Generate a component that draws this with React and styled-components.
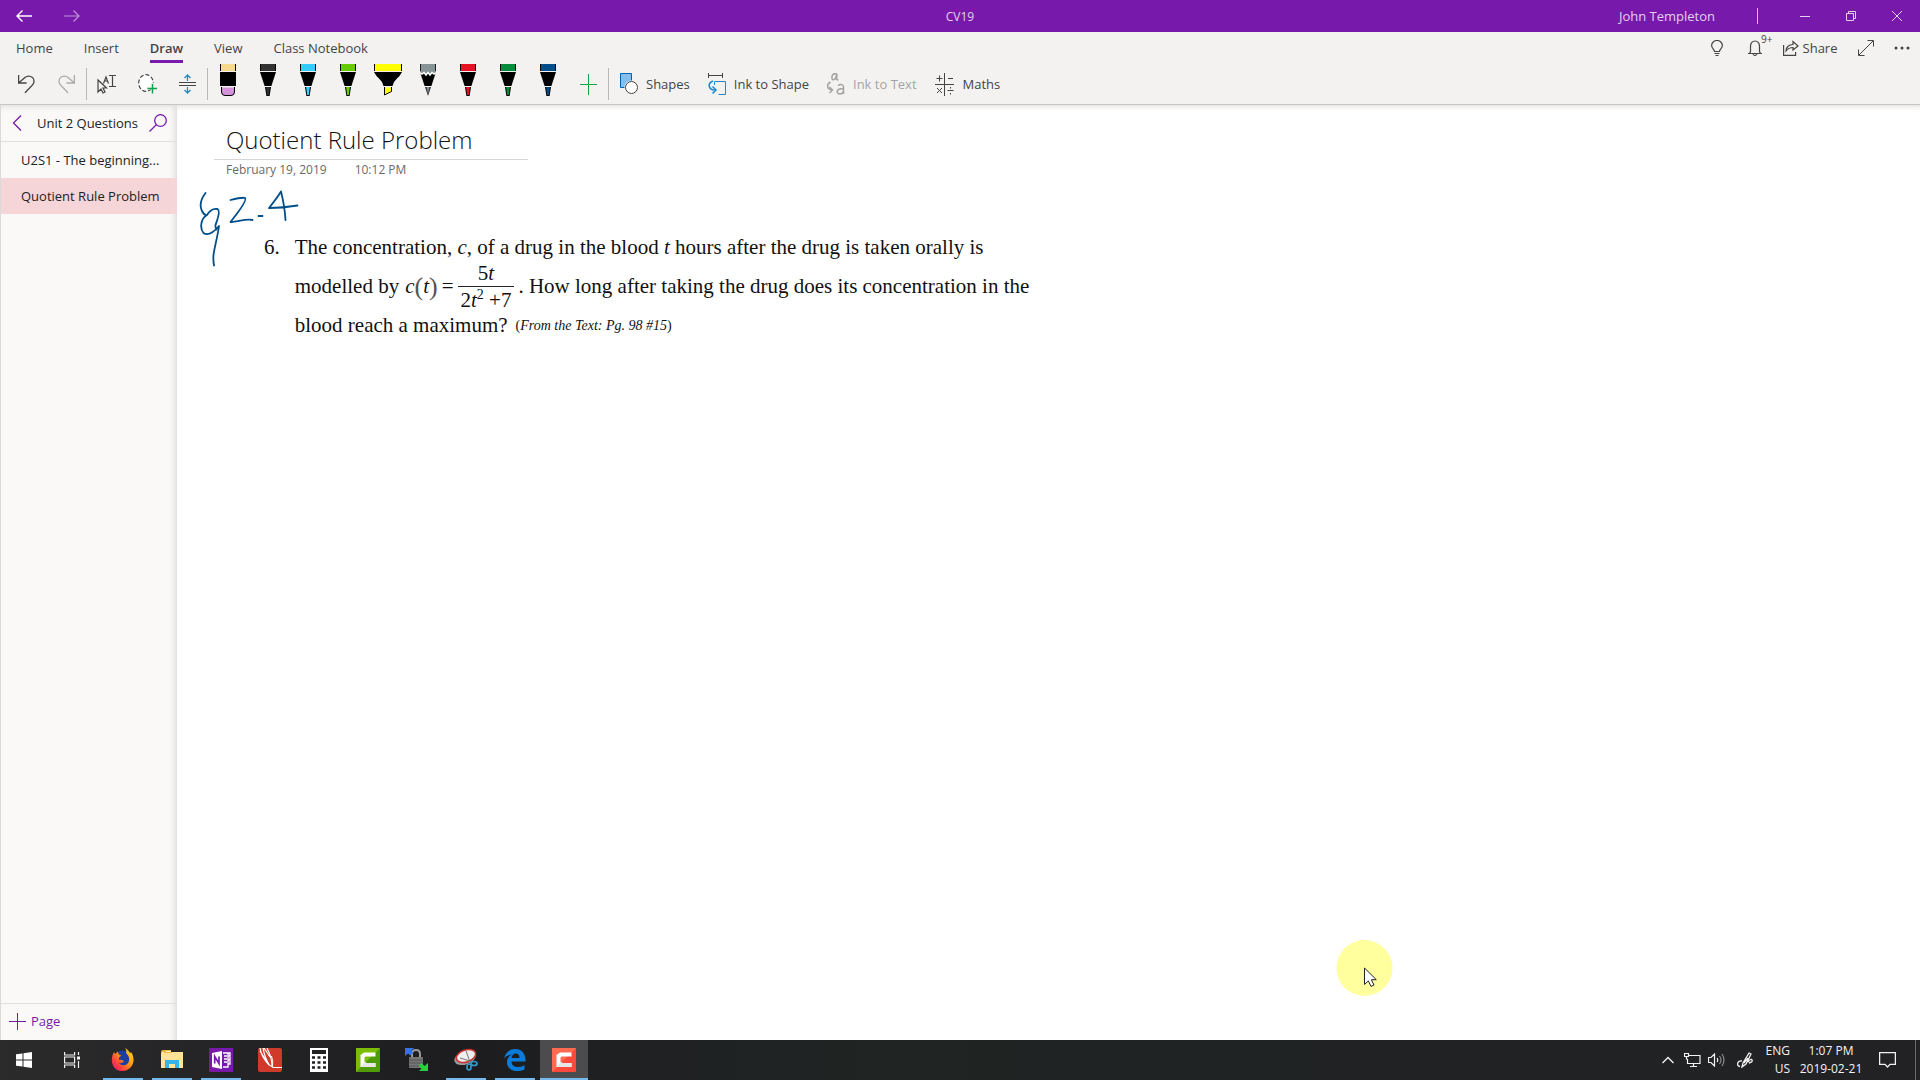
import React from "react";
import styled, { createGlobalStyle } from "styled-components";

const ui = `"Open Sans", "Noto Sans", sans-serif`;
const purple = "#7719aa";

const GlobalStyle = createGlobalStyle`
  * { box-sizing: border-box; }
  body { margin: 0; font-family: ${ui}; font-size: 13px; color: #444; background: #fff; }
  button { font: inherit; color: inherit; background: none; border: 0; padding: 0; margin: 0; }
  p, h1, h2, ul { margin: 0; padding: 0; }
  ul { list-style: none; }
  svg { display: block; flex: none; }
`;

const Shell = styled.div`
  min-height: 100vh;
  display: grid;
  grid-template-rows: 32px 73px 1fr 40px;
`;

/* ---------- title bar ---------- */
const TitleBar = styled.header`
  display: grid;
  grid-template-columns: 1fr auto 1fr;
  align-items: center;
  background: ${purple};
  color: #e6d0f0;
`;
const BarSide = styled.div`
  display: flex;
  align-items: center;
  justify-content: ${(p) => (p.$end ? "flex-end" : "flex-start")};
  height: 32px;
`;
const NavButton = styled.button`
  width: 48px;
  height: 32px;
  display: grid;
  place-items: center;
  color: ${(p) => (p.$dim ? "#c195da" : "#fff")};
`;
const AppTitle = styled.h1`
  font-size: 12px;
  font-weight: 400;
`;
const UserName = styled.span`
  margin-right: 42px;
`;
const BarRule = styled.span`
  width: 1px;
  height: 16px;
  margin-right: 24px;
  background: #d6b9e6;
`;
const WindowButton = styled.button`
  width: 46px;
  height: 32px;
  display: grid;
  place-items: center;
`;

/* ---------- ribbon ---------- */
const Ribbon = styled.div`
  background: #f3f2f1;
  border-bottom: 1px solid #c8c6c4;
  display: grid;
  grid-template-rows: 32px 40px;
`;
const RibbonTop = styled.div`
  display: flex;
  justify-content: space-between;
`;
const Tabs = styled.nav`
  display: flex;
  gap: 31px;
  padding-left: 16px;
`;
const Tab = styled.button`
  height: 31px;
  padding-top: 4px;
  border-bottom: 3px solid ${(p) => (p.$active ? purple : "transparent")};
  font-weight: ${(p) => (p.$active ? 600 : 400)};
`;
const RibbonActions = styled.div`
  display: flex;
  align-items: flex-end;
  padding-right: 2px;
`;
const ActionButton = styled.button`
  height: 32px;
  width: ${(p) => p.$w || 38}px;
  display: flex;
  align-items: center;
  justify-content: center;
  gap: 4px;
`;
const BellWrap = styled.span`
  position: relative;
`;
const Badge = styled.span`
  position: absolute;
  left: 13px;
  top: -7px;
  font-size: 10px;
  line-height: 12px;
`;
const ToolRow = styled.div`
  display: flex;
  padding-left: 6px;
`;
const ToolButton = styled.button`
  width: 40px;
  height: 40px;
  display: grid;
  place-items: center;
`;
const PenButton = styled.button`
  width: 40px;
  height: 40px;
  display: flex;
  justify-content: center;
  align-items: flex-start;
`;
const ToolRule = styled.span`
  width: 1px;
  height: 32px;
  margin-top: 4px;
  background: #bab8b7;
`;
const LabelTool = styled.button`
  height: 40px;
  display: flex;
  align-items: center;
  gap: 8px;
  padding: 0 7px 0 11px;
  opacity: ${(p) => (p.disabled ? 0.45 : 1)};
`;

/* ---------- workspace ---------- */
const Workspace = styled.div`
  display: grid;
  grid-template-columns: 177px 1fr;
`;
const Sidebar = styled.aside`
  display: flex;
  flex-direction: column;
  background: #faf9f8;
  color: #222;
  border-left: 1px solid #dcdad8;
  box-shadow: inset -7px 0 6px -5px #dcdad8, inset 0 6px 6px -5px #dcdad8;
`;
const SectionHead = styled.div`
  height: 37px;
  padding: 0 9px 0 6px;
  display: flex;
  align-items: center;
  justify-content: space-between;
  border-bottom: 1px solid #e1dfdd;
`;
const SectionTitle = styled.h2`
  font-size: 13px;
  font-weight: 400;
`;
const IconButton = styled.button`
  width: 20px;
  height: 24px;
  display: grid;
  place-items: center;
  color: ${purple};
`;
const PageItem = styled.button`
  display: block;
  width: 100%;
  height: 36px;
  padding-left: 20px;
  text-align: left;
  background: ${(p) => (p.$active ? "#f6d5d9" : "transparent")};
  white-space: nowrap;
`;
const AddPage = styled.button`
  margin-top: auto;
  height: 37px;
  padding: 0 0 2px 8px;
  display: flex;
  align-items: center;
  gap: 5px;
  border-top: 1px solid #e1dfdd;
  color: ${purple};
`;
const Canvas = styled.main`
  position: relative;
  background: #fff;
  padding: 18px 37px;
  box-shadow: inset 0 6px 6px -5px #dcdad8;
`;
const NoteTitle = styled.h2`
  width: 314px;
  height: 37px;
  padding-left: 12px;
  border-bottom: 1px solid #d6d6d6;
  font: 300 24px/34px "Open Sans", Lato, sans-serif;
  color: #111;
  white-space: nowrap;
`;
const NoteDate = styled.p`
  display: flex;
  gap: 28px;
  padding-left: 12px;
  font-size: 12px;
  line-height: 20px;
  color: #6a6a6a;
`;
const Problem = styled.section`
  display: flex;
  gap: 15px;
  margin-top: 48px;
  padding-left: 50px;
  font: 21px/39px "Liberation Serif", serif;
  color: #111;
`;
const Line = styled.p`
  height: 39px;
  display: flex;
  align-items: center;
  white-space: pre;
`;
const Formula = styled.span`
  display: flex;
  align-items: center;
  margin: 0 4px 0 6px;
`;
const Paren = styled.span`
  font-size: 26px;
  color: #555;
`;
const Equals = styled.span`
  margin: 0 4px;
`;
const Fraction = styled.span`
  display: flex;
  flex-direction: column;
  text-align: center;
  line-height: 26px;
`;
const Denominator = styled.span`
  border-top: 1px solid #222;
  padding: 0 3px;
`;
const Power = styled.sup`
  font-size: 14px;
  line-height: 0;
`;
const Source = styled.small`
  margin-left: 8px;
  font-size: 14px;
`;
const Ink = styled.svg`
  position: absolute;
  left: 20px;
  top: 82px;
`;
const Pointer = styled.svg`
  position: absolute;
  left: 1158px;
  bottom: 42px;
`;

/* ---------- taskbar ---------- */
const Taskbar = styled.footer`
  display: flex;
  justify-content: space-between;
  background: linear-gradient(90deg, #2b2b2c, #1d1d20 24%, #202423 45%, #222224);
  color: #f2f2f2;
  font-size: 12px;
`;
const TaskGroups = styled.div`
  display: flex;
  gap: 3px;
`;
const TaskApps = styled.div`
  display: flex;
  gap: ${(p) => p.$gap || 0}px;
`;
const TaskButton = styled.button`
  width: 48px;
  height: 40px;
  display: grid;
  place-items: center;
  background: ${(p) => (p.$active ? "#4c4c4f" : "transparent")};
  box-shadow: ${(p) => (p.$active ? "inset 0 -2px #76b9ed" : "none")};
  &::after {
    content: "";
    display: ${(p) => (p.$open ? "block" : "none")};
    grid-area: 1 / 1;
    align-self: end;
    width: 40px;
    height: 2px;
    background: #76b9ed;
  }
  svg { grid-area: 1 / 1; }
`;
const Tray = styled.div`
  display: flex;
  align-items: center;
  padding-right: 4px;
`;
const TrayButton = styled.button`
  width: ${(p) => p.$w || 24}px;
  height: 40px;
  display: grid;
  place-items: center;
`;
const TrayText = styled.button`
  width: ${(p) => p.$w}px;
  height: 40px;
  line-height: 18px;
  text-align: ${(p) => p.$align || "center"};
  white-space: nowrap;
`;
const TrayClock = styled(TrayText)`
  margin-left: 6px;
`;
const DesktopEdge = styled.span`
  width: 1px;
  height: 40px;
  margin-left: 7px;
  background: #6a6a6c;
`;

const Svg = ({ w, h, sw = 1, children }) => (
  <svg width={w} height={h} viewBox={`0 0 ${w} ${h}`} fill="none" stroke="currentColor" strokeWidth={sw} aria-hidden="true">
    {children}
  </svg>
);

const Pen = ({ color }) => (
  <svg width="16" height="32" viewBox="0 0 16 32" aria-hidden="true">
    <path d="M0 0h16v7H0z" fill={color} />
    <path d="M.5 0v7M15.500 0v7" stroke="#000" />
    <path d="M0 8h16l-4.600 14H4.600z" fill="#000" />
    <path d="M5 23h6L9.600 32H6.400z" fill="#000" />
    <path d="M6.100 23h3.800L8.900 31H7.100z" fill={color} />
  </svg>
);
const Eraser = () => (
  <svg width="16" height="32" viewBox="0 0 16 32" aria-hidden="true">
    <path d="M0 0h16v7H0z" fill="#f8da8c" />
    <path d="M.5 0v7M15.500 0v7" stroke="#000" />
    <path d="M0 8h16v14H0z" />
    <path d="M1.500 23.500h13v4.500q0 3.500-3.500 3.500H5q-3.500 0-3.500-3.500z" fill="#d492da" />
    <path d="M1.500 23v5q0 3.500 3.500 3.500h6q3.500 0 3.500-3.500v-5" fill="none" stroke="#000" />
  </svg>
);
const Highlighter = () => (
  <svg width="28" height="32" viewBox="0 0 28 32" aria-hidden="true">
    <path d="M0 0h28v7H0z" fill="#ff0" />
    <path d="M.5 0v7M27.500 0v7" stroke="#000" />
    <path d="M0 8h28q-2 4-5 6.500-3.500 3-4.500 7.500h-9Q8.500 17.500 5 14.500 2 12 0 8z" />
    <path d="M10.500 23.500h7v4l-7 3.500z" fill="#ff0" />
    <path d="M10.500 23v8l7-3.500V23" fill="none" stroke="#000" />
  </svg>
);
const Pencil = () => (
  <svg width="16" height="32" viewBox="0 0 16 32" aria-hidden="true">
    <path d="M0 8h16l-4.600 14H4.600z" />
    <path d="M0 0h16v8l-2 2-2-1.500-2 2-2-2-2 2-2-2-2 1.500-2-2z" fill="#869397" />
    <path d="M0 8.500l2 1.500 2-1.500 2 2.500 2-2.500 2 2.500 2-2.500 2 1.500 2-1.500" fill="none" stroke="#fff" strokeWidth="1.500" />
    <path d="M.5 0v7M15.500 0v7" stroke="#222" />
    <path d="M5 23h6L8 32z" fill="#333" />
    <path d="M6.600 23h2.800L8 30z" fill="#869397" />
  </svg>
);

const tools = [
  { name: "Black pen", draw: <Pen color="#333" /> },
  { name: "Light blue pen", draw: <Pen color="#33ccff" /> },
  { name: "Light green pen", draw: <Pen color="#66cc00" /> },
  { name: "Yellow highlighter", draw: <Highlighter /> },
  { name: "Pencil", draw: <Pencil /> },
  { name: "Red pen", draw: <Pen color="#e81224" /> },
  { name: "Green pen", draw: <Pen color="#008c3a" /> },
  { name: "Blue pen", draw: <Pen color="#004f8b" /> },
];

const ShapesIcon = () => (
  <Svg w={18} h={22}>
    <path d="M.5.5h11v14H.5z" fill="#83beec" stroke="#0063b1" />
    <circle cx="11.500" cy="14.500" r="7" fill="#f3f2f1" stroke="none" />
    <circle cx="11.500" cy="14.500" r="6" fill="#fff" />
  </Svg>
);
const InkShapeIcon = () => (
  <Svg w={18} h={22}>
    <path d="M.5 0v5M14.500 0v5M.5 2.500h14" />
    <path d="M6.500 12V8.500h11v13h-7" stroke="#1e8bcd" fill="none" />
    <path d="M5 8C-.5 10 0 16.500 6.500 17M4.500 13.500L8 17l-3.500 3.500" stroke="#1e8bcd" strokeWidth="1.600" />
  </Svg>
);
const InkTextIcon = () => (
  <Svg w={18} h={22} sw={1.5}>
    <path d="M10 1C6-.5 4.500 3 5 5.500 6 8.500 9 6 10 1M10 1L9.500 6.500l2 .5M3.500 9C-.5 11-.5 16.500 5 17M2.500 14l3 3-3 3M11 12.500q5-2.500 5.500 1.500v7M16.500 16c-8-1-7.500 5-3.500 5 2 0 3.500-2 3.500-3" />
  </Svg>
);
const MathsIcon = () => (
  <Svg w={20} h={24}>
    <path d="M0 12.500h19M9.500 1v23M1.500 6.500h6M4.500 3.500v6M13 6.500h5M2 16l5 5M7 16l-5 5M12.500 18.500h6M15.500 15v1.500M15.500 21v1.500" />
  </Svg>
);

const Camtasia = ({ from, to }) => (
  <svg width="24" height="24" viewBox="0 0 24 24" aria-hidden="true">
    <rect width="24" height="24" rx="1" fill={to} />
    <path d="M0 0h24L0 24z" fill={from} />
    <path d="M19.500 4.500H8L4.500 7v12H19.500v-4H10.500l-2-1V9.500l1-1h10z" fill="#fff" />
    <path d="M4.500 19l4-5 2 1h9v4z" fill="#e6e6e6" />
  </svg>
);

const systemApps = [
  { name: "Start", draw: <svg width="16" height="16" viewBox="0 0 16 16" fill="#fff"><path d="M0 2.300l6.500-.9v6.100H0zM7.500 1.300L16 0v7.500H7.500zM0 8.500h6.500v6.100L0 13.700zM7.500 8.500H16V16l-8.500-1.300z" /></svg> },
  { name: "Task View", draw: <Svg w={17} h={16} sw={1.2}><path d="M.6 0v3h10V0M.6 16v-3h10v3M.6 5h10v6H.6zM14.500 0v3M14.500 9v7" /><path d="M13 4.500h3v3h-3z" fill="currentColor" stroke="none" /></Svg> },
];
const taskApps = [
  { name: "Firefox", open: true, draw: (
    <svg width="24" height="24" viewBox="0 0 24 24">
      <defs><linearGradient id="ff" x1="1" y1="0" x2="0" y2="1"><stop offset="0" stopColor="#ffe226" /><stop offset=".45" stopColor="#ff9415" /><stop offset=".75" stopColor="#ff3647" /><stop offset="1" stopColor="#e31587" /></linearGradient></defs>
      <circle cx="12" cy="11" r="8.500" fill="#1b3f9e" />
      <path d="M14 0c3 2 4 3 5 5 1-.5 1-1 1-1 3 4 4 11-.5 15.500C14 25 5 24 2 17.500-.5 12 1.500 6.500 3 4l1 2 3-2.500C7 6 8 7 10.500 7.500L8 9.500v2.500c2-1 4 .5 5 1-2 3-4 2-5 2 3 4 9 2.500 10-2 .8-4-1-6-3-8 1-1.500 0-3.500-1-5z" fill="url(#ff)" />
    </svg>) },
  { name: "File Explorer", open: true, draw: <svg width="22" height="20" viewBox="0 0 22 20"><path d="M0 2h10V0H2Q0 0 0 2v4h22V2H10z" fill="#e8b63f" /><path d="M0 3h10l2-1h10v16H0z" fill="#ffe397" /><path d="M4 18v-8h14v8h-4v-4H8v4z" fill="#34b4e8" /><path d="M1 2.500h2M5 1.500h5" stroke="#fff5d1" /></svg> },
  { name: "OneNote", open: true, draw: <svg width="24" height="24" viewBox="0 0 24 24"><path d="M0 0h24v24H0z" fill="#7719aa" /><path d="M3 5l10-2v18L3 19z" fill="#fff" /><path d="M5.700 15.500v-7l4.300 7v-7" fill="none" stroke="#7719aa" strokeWidth="1.700" /><path d="M14 5h5v14h-5M15 8h3M15 11h3M15 14h3M19 5h2v3h-2M21 9v3h-2M21 13v3h-2" fill="none" stroke="#fff" strokeWidth="1.300" /></svg> },
  { name: "PDF editor", draw: <svg width="24" height="24" viewBox="0 0 24 24"><rect width="24" height="24" rx="2" fill="#d03a29" /><path d="M2 0c1 6 4 12 9 17M5 0c1 6 3 12 7 18M6 0l6 9M9 0c2 4 5 10 5 18M2 3l8 12" fill="none" stroke="#fff" strokeWidth="1.200" /><path d="M13.500 8q2 5 1 11M12 17.500l3 2h9" fill="none" stroke="#fff" /></svg> },
  { name: "Calculator", draw: <svg width="18" height="24" viewBox="0 0 18 24"><path d="M0 0h18v24H0z" fill="#fff" /><path d="M2 2h14v4H2z" fill="#222" /><path d="M2 9.500h3M7.500 9.500h3M13 9.500h3M2 14.500h3M7.500 14.500h3M13 14.500h3M2 19.500h3M7.500 19.500h3M13 19.500h3" stroke="#222" strokeWidth="2.500" /></svg> },
  { name: "Camtasia", draw: <Camtasia from="#7dbd05" to="#4f9b08" /> },
  { name: "Secure transfer", draw: <svg width="24" height="24" viewBox="0 0 24 24"><path d="M7 11V6q0-4 4-4t4 4v5" fill="none" stroke="#9a9a9a" strokeWidth="2" /><rect x="4" y="9" width="14" height="11" rx="1" fill="#777" /><path d="M4 12h14M4 15h14M4 18h14" stroke="#555" /><path d="M0 0h9L6.500 2.500 8 5 5.500 7.500 3 5.500 0 8z" fill="#2f74e8" /><path d="M23 23h-9l2.500-2.500-3-3 3-2.500 3 3L23 15z" fill="#24d43a" /></svg> },
  { name: "Snipping Tool", open: true, draw: <svg width="24" height="24" viewBox="0 0 24 24"><ellipse cx="11" cy="10" rx="11" ry="6.500" transform="rotate(-18 11 10)" fill="#999" /><ellipse cx="12" cy="8" rx="10" ry="6" transform="rotate(-18 12 8)" fill="#eee" stroke="#c9302f" strokeWidth="1.500" /><path d="M12 3l4 11M6 10l10 3" stroke="#777" /><g fill="none" stroke="#2f9ac9" strokeWidth="1.700"><ellipse cx="15" cy="19" rx="2" ry="3" /><ellipse cx="20" cy="15.500" rx="3" ry="2" /></g></svg> },
  { name: "Edge", open: true, draw: <svg width="22" height="22" viewBox="0 0 22 22"><path d="M0 9.500C1.500 3 6 0 11 0c7 0 11 5 10.500 12.500h-14c0 4 3 5.500 6.500 5.500 3 0 5-1 6.500-2v4.500C18 21.500 15.500 22 12.500 22 7 22 3 18.500 3 13.500c0-4 2-6.500 5-8-4 .5-6.500 2-8 4zM7.500 9h8c0-3-1.200-4.500-3.700-4.500C9.500 4.500 8 6 7.500 9z" fill="#0b7cda" /></svg> },
  { name: "Camtasia Recorder", active: true, draw: <Camtasia from="#ff6a50" to="#fb4a3c" /> },
];

const renderApp = (a) => (
  <TaskButton key={a.name} aria-label={a.name} $open={a.open} $active={a.active}>{a.draw}</TaskButton>
);

export default function App() {
  return (
    <Shell>
      <GlobalStyle />
      <TitleBar>
        <BarSide>
          <NavButton aria-label="Back"><Svg w={16} h={12} sw={1.4}><path d="M16 6H1M6.500.5L1 6l5.500 5.500" /></Svg></NavButton>
          <NavButton $dim aria-label="Forward"><Svg w={16} h={12} sw={1.2}><path d="M0 6h15M9.500.5L15 6l-5.500 5.500" /></Svg></NavButton>
        </BarSide>
        <AppTitle>CV19</AppTitle>
        <BarSide $end>
          <UserName>John Templeton</UserName>
          <BarRule />
          <WindowButton aria-label="Minimize"><Svg w={10} h={10}><path d="M0 5.500h10" /></Svg></WindowButton>
          <WindowButton aria-label="Restore"><Svg w={10} h={10}><path d="M.5 2.500h7v7h-7zM2.500 2.500v-2h7v7h-2" /></Svg></WindowButton>
          <WindowButton aria-label="Close"><Svg w={10} h={10}><path d="M0 0l10 10M10 0L0 10" /></Svg></WindowButton>
        </BarSide>
      </TitleBar>

      <Ribbon>
        <RibbonTop>
          <Tabs>
            {["Home", "Insert", "Draw", "View", "Class Notebook"].map((t) => (
              <Tab key={t} $active={t === "Draw"}>{t}</Tab>
            ))}
          </Tabs>
          <RibbonActions>
            <ActionButton aria-label="Tell me"><Svg w={12} h={16} sw={1.2}><path d="M3.500 11.500C3.500 9 .6 8.500.6 5.500a5.400 5 0 0 1 10.800 0c0 3-2.900 3.500-2.900 6zM3.500 13.500h5M4.500 15.500h3" /></Svg></ActionButton>
            <ActionButton aria-label="Notifications">
              <BellWrap>
                <Svg w={14} h={16} sw={1.2}><path d="M0 13.500h14M1.500 13.500l1-2V6a4.500 5 0 0 1 9 0v5.500l1 2M5 14q2 3 4 0" /></Svg>
                <Badge>9+</Badge>
              </BellWrap>
            </ActionButton>
            <ActionButton $w={72}>
              <Svg w={16} h={16} sw={1.2}><path d="M.6 5v10.400h12V12M3 11c0-4 3-6.500 7-6.500V1.500L15 6l-5 4V7.500C7 7.500 5 8.500 3 11z" /></Svg>
              Share
            </ActionButton>
            <ActionButton $w={40} aria-label="Full screen"><Svg w={16} h={16}><path d="M1 15L15 1M9.500.5h6v6M.5 9.500v6h6" /></Svg></ActionButton>
            <ActionButton $w={32} aria-label="More"><svg width="16" height="4" viewBox="0 0 16 4" fill="#444"><circle cx="2" cy="2" r="1.500" /><circle cx="8" cy="2" r="1.500" /><circle cx="14" cy="2" r="1.500" /></svg></ActionButton>
          </RibbonActions>
        </RibbonTop>
        <ToolRow>
          <ToolButton aria-label="Undo"><Svg w={17} h={20} sw={1.3}><path d="M.6 1v8h8M.8 8.800L7 3.500C10 1 16 2 16 7.500c0 4-6 7-9 11.500" /></Svg></ToolButton>
          <ToolButton aria-label="Redo" disabled><svg width="17" height="20" viewBox="0 0 17 20" fill="none" stroke="#aaa" strokeWidth="1.300"><path d="M16.400 1v8h-8M16.200 8.800L10 3.500C7 1 1 2 1 7.500c0 4 6 7 9 11.500" /></svg></ToolButton>
          <ToolRule />
          <ToolButton aria-label="Select text"><Svg w={20} h={20} sw={1.2}><path d="M1 6v12l3-3 2 4 2-1-2-4h3.500zM6.500 9.500L9 3l2.500 6.500M7.500 7h3M12 1.500h3l.5.5.5-.5h3M12 12.500h3l.5-.5.5.5h3M15.500 2v10" /></Svg></ToolButton>
          <ToolButton aria-label="Lasso select"><Svg w={19} h={20} sw={1.2}><ellipse cx="8" cy="9" rx="7.300" ry="8.300" fill="#fff" strokeDasharray="4 2" /><path d="M9 14h10M14.500 9v11" stroke="#f3f2f1" strokeWidth="3" /><path d="M9.500 14.500h9.500M14.500 10v9.500" stroke="#10a34a" strokeWidth="1.500" /></Svg></ToolButton>
          <ToolButton aria-label="Insert space"><Svg w={17} h={20}><path d="M0 8.500h17M0 11.500h17" /><path d="M8.500 7V1M5.500 4l3-3 3 3M8.500 13v6M5.500 16l3 3 3-3" stroke="#1e8bcd" strokeWidth="1.300" /></Svg></ToolButton>
          <ToolRule />
          <PenButton aria-label="Eraser"><Eraser /></PenButton>
          {tools.map((t) => <PenButton key={t.name} aria-label={t.name}>{t.draw}</PenButton>)}
          <ToolButton aria-label="Add pen"><svg width="17" height="21" viewBox="0 0 17 21" fill="none" stroke="#10a34a"><path d="M0 10.500h17M8.500 0v21" /></svg></ToolButton>
          <ToolRule />
          <LabelTool><ShapesIcon />Shapes</LabelTool>
          <LabelTool><InkShapeIcon />Ink to Shape</LabelTool>
          <LabelTool disabled><InkTextIcon />Ink to Text</LabelTool>
          <LabelTool><MathsIcon />Maths</LabelTool>
        </ToolRow>
      </Ribbon>

      <Workspace>
        <Sidebar>
          <SectionHead>
            <IconButton aria-label="Back to sections"><Svg w={10} h={16} sw={1.3}><path d="M9 .5L1.500 8 9 15.500" /></Svg></IconButton>
            <SectionTitle>Unit 2 Questions</SectionTitle>
            <IconButton aria-label="Search"><Svg w={18} h={18} sw={1.3}><circle cx="11.500" cy="6.500" r="5.800" /><path d="M7.500 10.500L.5 17.500" /></Svg></IconButton>
          </SectionHead>
          <ul>
            <li><PageItem>U2S1 - The beginning...</PageItem></li>
            <li><PageItem $active>Quotient Rule Problem</PageItem></li>
          </ul>
          <AddPage><Svg w={17} h={17}><path d="M0 8.500h17M8.500 0v17" /></Svg>Page</AddPage>
        </Sidebar>

        <Canvas>
          <NoteTitle>Quotient Rule Problem</NoteTitle>
          <NoteDate><span>February 19, 2019</span><span>10:12 PM</span></NoteDate>
          <Problem>
            <span>6.</span>
            <div>
              <Line>The concentration, <i>c</i>, of a drug in the blood <i>t</i> hours after the drug is taken orally is</Line>
              <Line>
                modelled by
                <Formula>
                  <i>c</i><Paren>(</Paren><i>t</i><Paren>)</Paren><Equals>=</Equals>
                  <Fraction>
                    <span>5<i>t</i></span>
                    <Denominator>2<i>t</i><Power>2</Power> +7</Denominator>
                  </Fraction>
                </Formula>
                . How long after taking the drug does its concentration in the
              </Line>
              <Line>blood reach a maximum?<Source>(<i>From the Text: Pg. 98 #15</i>)</Source></Line>
            </div>
          </Problem>
          <Ink width="104" height="84" viewBox="197 187 104 84" fill="none" stroke="#004f8b" strokeWidth="1.800" strokeLinecap="round" strokeLinejoin="round" role="img" aria-label="Handwritten section 2.4">
            <path d="M205.500 193C201 199 199.500 206 202 211c1.500 3 3 4.500 5 4 3-5 6-7 10.500-6 3.500 2-.5 12-2 16-.3 2 .3 3.500 1 4.500M207 215c-7 4-7 14-3.500 18 5 3.500 10-.5 15.500-7-1 9-5 23-5.500 29-.5 4-.2 6 .5 10.500" />
            <path d="M230.500 200c6-1.500 12-3 14.500-2 2 2-4 11-14.500 24 6 .5 14-3.500 22-2M258.500 216h4" />
            <path d="M281 191.500c-3 5-8 11.500-12 16.500 8 0 19-1 28.500-2.500M281 191.500c2 8 4 19 4.500 28.500" />
          </Ink>
          <Pointer width="60" height="60" viewBox="0 0 60 60" aria-hidden="true">
            <circle cx="29.500" cy="30" r="28" fill="#ffff9e" />
            <path d="M29.500 30v16.500l3.800-3.600 2.700 5.500 3-1.400-2.600-5.300h4.900z" fill="#fff" stroke="#222" />
          </Pointer>
        </Canvas>
      </Workspace>

      <Taskbar>
        <TaskGroups>
          <TaskApps>{systemApps.map(renderApp)}</TaskApps>
          <TaskApps $gap={1}>{taskApps.map(renderApp)}</TaskApps>
        </TaskGroups>
        <Tray>
          <TrayButton aria-label="Show hidden icons"><Svg w={12} h={8} sw={1.4}><path d="M.5 7L6 1.500 11.500 7" /></Svg></TrayButton>
          <TrayButton aria-label="Network"><Svg w={17} h={14} sw={1.2}><path d="M5 2.500h11v8H3.500V6M9.500 10.500v3M6 13.500h7M.5.5h4v3h-4zM2.500 3.500V6h1" /></Svg></TrayButton>
          <TrayButton aria-label="Volume"><Svg w={17} h={14} sw={1.2}><path d="M.5 4.500H3L6.500 1v12L3 9.500H.5zM9 5q1.500 2 0 4" /><path d="M11.500 3q3 4 0 8M14 1q4 6 0 12" opacity=".5" /></Svg></TrayButton>
          <TrayButton $w={34} aria-label="Ink workspace"><Svg w={17} h={16} sw={1.3}><path d="M5 15l1-4 6-10 2 1-5 10-4 3zM5 9c-5-.5-6 5-2 5.500M7 11l4-5M11 10q3-4 4-2t-3 3" /></Svg></TrayButton>
          <TrayText $w={28} $align="right">ENG<br />US</TrayText>
          <TrayClock $w={70}>1:07 PM<br />2019-02-21</TrayClock>
          <TrayButton $w={42} aria-label="Notifications"><Svg w={17} h={16} sw={1.3}><path d="M.6.6h15.800v11.800H11L8.500 15 6 12.400H.6z" /></Svg></TrayButton>
          <DesktopEdge />
        </Tray>
      </Taskbar>
    </Shell>
  );
}
